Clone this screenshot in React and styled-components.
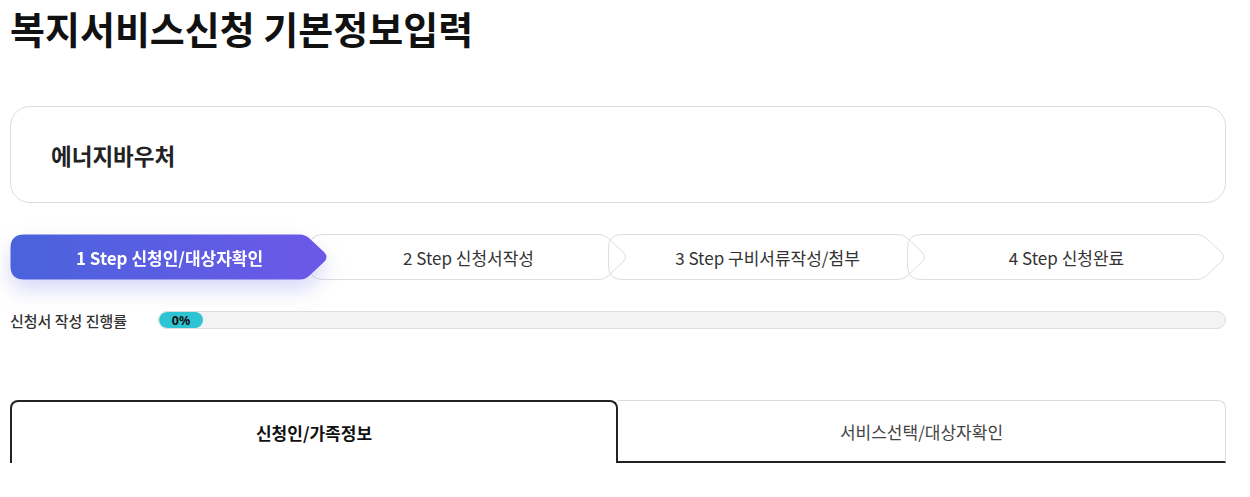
import React from "react";
import styled, { createGlobalStyle } from "styled-components";

const GlobalStyle = createGlobalStyle`
  body {
    margin: 0;
    background: #fff;
    font-family: "Noto Sans CJK KR", "Noto Sans", sans-serif;
    color: #222;
  }
`;

const Page = styled.div`
  padding: 0 24px 0 10px;
`;

const Title = styled.h1`
  margin: 3px 0 0;
  font-size: 38px;
  line-height: 50px;
  font-weight: 700;
  color: #111;
`;

const ServiceCard = styled.section`
  margin-top: 53px;
  height: 97px;
  box-sizing: border-box;
  border: 1px solid #dcdcdc;
  border-radius: 20px;
  display: flex;
  align-items: center;
  padding: 0 40px;
  font-size: 22.5px;
  font-weight: 700;
  color: #222;
`;

const Steps = styled.ol`
  list-style: none;
  margin: 31px 0 0;
  padding: 0;
  display: flex;
  height: 46px;
  & > li + li {
    margin-left: -20px;
  }
`;

const Step = styled.li`
  position: relative;
  flex: 1 1 0;
  height: 46px;
  display: flex;
  align-items: center;
  justify-content: center;
  font-size: 17px;
  font-weight: ${(p) => (p.$active ? 700 : 400)};
  color: ${(p) => (p.$active ? "#fff" : "#333")};
  z-index: ${(p) => (p.$active ? 2 : 1)};
  filter: ${(p) =>
    p.$active ? "drop-shadow(0 10px 10px rgba(100, 100, 230, 0.25))" : "none"};
`;

const StepShape = styled.svg`
  position: absolute;
  inset: 0;
  width: 100%;
  height: 100%;
  overflow: visible;
`;

const StepLabel = styled.span`
  position: relative;
`;

const Progress = styled.div`
  margin-top: 31px;
  display: flex;
  align-items: center;
  height: 18px;
`;

const ProgressLabel = styled.span`
  width: 148px;
  flex-shrink: 0;
  font-size: 15px;
  font-weight: 500;
  color: #333;
`;

const Track = styled.div`
  flex: 1;
  height: 18px;
  box-sizing: border-box;
  border: 1px solid #dddddd;
  border-radius: 9px;
  background: #f3f3f3;
  overflow: hidden;
  display: flex;
`;

const Fill = styled.div`
  min-width: 44px;
  height: 100%;
  border-radius: 9px;
  background: #2ec4d3;
  display: flex;
  align-items: center;
  justify-content: center;
  font-family: "Noto Sans", sans-serif;
  font-size: 12.5px;
  font-weight: 700;
  color: #111;
`;

const Tabs = styled.div`
  margin-top: 71px;
  display: grid;
  grid-template-columns: 1fr 1fr;
  height: 63px;
`;

const Tab = styled.button`
  box-sizing: border-box;
  height: 63px;
  background: #fff;
  font-family: inherit;
  font-size: 17px;
  font-weight: ${(p) => (p.$active ? 700 : 400)};
  color: ${(p) => (p.$active ? "#111" : "#444")};
  border-radius: ${(p) => (p.$active ? "8px 8px 0 0" : "0 8px 0 0")};
  border: ${(p) => (p.$active ? "2px solid #222" : "1px solid #dcdcdc")};
  border-bottom: ${(p) => (p.$active ? "none" : "2px solid #222")};
  border-left: ${(p) => (p.$active ? "2px solid #222" : "none")};
  padding: 0;
  padding-top: ${(p) => (p.$active ? "0" : "1px")};
`;

const steps = [
  "1 Step 신청인/대상자확인",
  "2 Step 신청서작성",
  "3 Step 구비서류작성/첨부",
  "4 Step 신청완료",
];

const shapePath =
  "M14 0.5 H290 Q295 0.5 299 4 L314 18 Q319 23 314 28 L299 42 Q295 45.5 290 45.5 H14 Q0.5 45.5 0.5 32 V14 Q0.5 0.5 14 0.5 Z";

function StepItem({ label, active }) {
  return (
    <Step $active={active}>
      <StepShape viewBox="0 0 319 46" preserveAspectRatio="none">
        <defs>
          <linearGradient id="stepGrad" x1="0" y1="0" x2="1" y2="0">
            <stop offset="0" stopColor="#4a63dc" />
            <stop offset="1" stopColor="#6c58e8" />
          </linearGradient>
        </defs>
        <path
          d={shapePath}
          fill={active ? "url(#stepGrad)" : "none"}
          stroke={active ? "none" : "#dddddd"}
          strokeWidth="1"
        />
      </StepShape>
      <StepLabel>{label}</StepLabel>
    </Step>
  );
}

export default function App() {
  return (
    <Page>
      <GlobalStyle />
      <Title>복지서비스신청 기본정보입력</Title>
      <ServiceCard>에너지바우처</ServiceCard>
      <Steps>
        {steps.map((s, i) => (
          <StepItem key={s} label={s} active={i === 0} />
        ))}
      </Steps>
      <Progress>
        <ProgressLabel>신청서 작성 진행률</ProgressLabel>
        <Track>
          <Fill style={{ width: "0%" }}>0%</Fill>
        </Track>
      </Progress>
      <Tabs>
        <Tab $active>신청인/가족정보</Tab>
        <Tab>서비스선택/대상자확인</Tab>
      </Tabs>
    </Page>
  );
}
